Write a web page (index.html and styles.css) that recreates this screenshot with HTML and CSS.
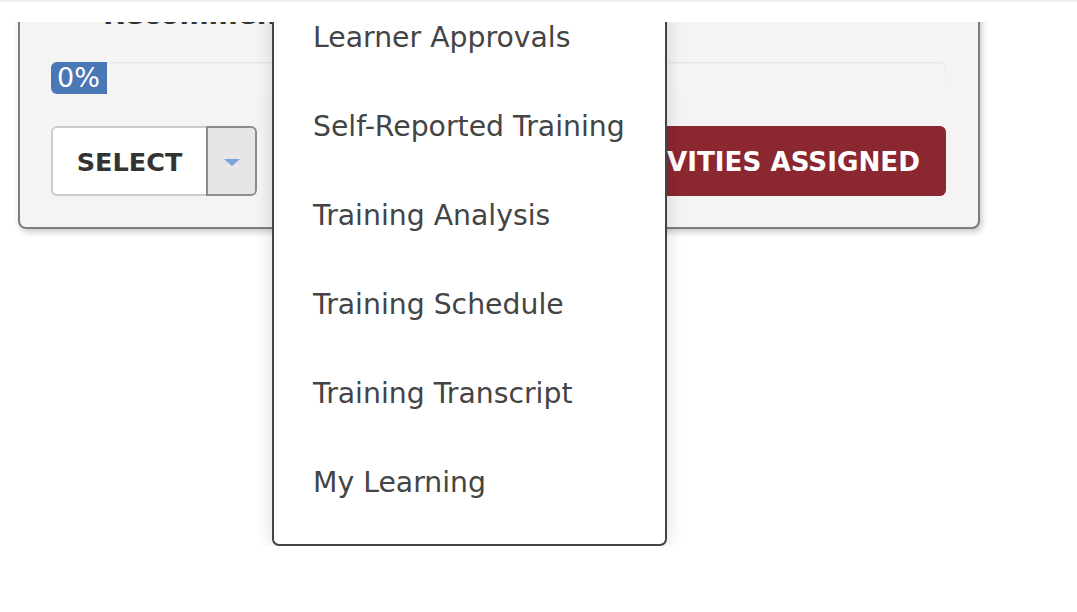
FILE: index.html
```html
<!DOCTYPE html>
<html lang="en">
<head>
<meta charset="utf-8">
<title>Training</title>
<link rel="stylesheet" href="styles.css">
</head>
<body>
<header class="topbar"></header>
<main class="page">
  <section class="card">
    <h2 class="card-title">Recommended</h2>
    <div class="progress">
      <div class="progress-fill" style="width: 56px;">0%</div>
    </div>
    <div class="actions">
      <div class="select-group">
        <button class="select-main" type="button">SELECT</button>
        <button class="select-caret" type="button" aria-label="Open"><span class="caret"></span></button>
      </div>
      <button class="assigned-btn" type="button">NO ACTIVITIES ASSIGNED</button>
    </div>
  </section>
</main>
<nav class="menu">
  <a class="menu-item" href="#">Learner Approvals</a>
  <a class="menu-item" href="#">Self-Reported Training</a>
  <a class="menu-item" href="#">Training Analysis</a>
  <a class="menu-item" href="#">Training Schedule</a>
  <a class="menu-item" href="#">Training Transcript</a>
  <a class="menu-item" href="#">My Learning</a>
</nav>
</body>
</html>
```

FILE: styles.css
```css
html, body {
  margin: 0;
  padding: 0;
  background: #ffffff;
  overflow: hidden;
}

body {
  font-family: "DejaVu Sans", Verdana, sans-serif;
  color: #333333;
  position: relative;
  min-height: 612px;
}

.topbar {
  position: fixed;
  top: 0;
  left: 0;
  right: 0;
  height: 22px;
  box-sizing: border-box;
  background: #ffffff;
  border-top: 2px solid #f2f2f2;
  z-index: 10;
}

.page {
  padding-left: 18px;
}

.card {
  width: 962px;
  box-sizing: border-box;
  margin-top: -30px;
  background: #f4f4f4;
  border: 2px solid #7d7d7d;
  border-radius: 8px;
  box-shadow: 2px 3px 6px rgba(0, 0, 0, 0.22);
  padding: 26px 32px 31px 31px;
}

.card-title {
  margin: 0 0 30px 52px;
  white-space: nowrap;
  font-size: 28px;
  line-height: 34px;
  font-weight: bold;
  color: #333333;
}

.progress {
  height: 32px;
  border-radius: 6px;
  background: #f5f5f5;
  box-shadow: inset 0 1px 2px rgba(0, 0, 0, 0.08);
  overflow: hidden;
  display: flex;
  margin-bottom: 32px;
}

.progress-fill {
  background: #4a77b5;
  color: #ffffff;
  font-size: 27px;
  line-height: 32px;
  padding-left: 6px;
  box-sizing: border-box;
}

.actions {
  display: flex;
  height: 70px;
}

.select-group {
  display: flex;
  height: 70px;
}

.select-main {
  width: 155px;
  height: 70px;
  box-sizing: border-box;
  background: #ffffff;
  border: 2px solid #cccccc;
  border-right: 0;
  border-radius: 6px 0 0 6px;
  font-family: "DejaVu Sans", Verdana, sans-serif;
  font-weight: bold;
  font-size: 25.5px;
  color: #333333;
  padding: 2px 0 0;
  margin: 0;
}

.select-caret {
  width: 51px;
  height: 70px;
  box-sizing: border-box;
  background: #e6e6e6;
  border: 2px solid #8c8c8c;
  border-radius: 0 6px 6px 0;
  padding: 0;
  margin: 0;
  display: flex;
  align-items: center;
  justify-content: center;
}

.caret {
  width: 0;
  height: 0;
  border-left: 8px solid transparent;
  border-right: 8px solid transparent;
  border-top: 7px solid #7aa3d9;
  margin-top: 2px;
}

.assigned-btn {
  flex: 1;
  margin: 0 0 0 30px;
  height: 70px;
  border: 0;
  border-radius: 6px;
  background: #8b2731;
  color: #ffffff;
  font-family: "DejaVu Sans", Verdana, sans-serif;
  font-weight: bold;
  font-size: 26.2px;
  display: flex;
  align-items: center;
  justify-content: flex-end;
  padding: 2px 26px 0 0;
}

.menu {
  position: absolute;
  left: 272px;
  top: -16px;
  width: 395px;
  box-sizing: border-box;
  background: #ffffff;
  border: 2px solid #444444;
  border-radius: 7px;
  padding: 8px 0 16px;
  box-shadow: 0 0 18px rgba(0, 0, 0, 0.14);
  clip-path: inset(-60px -40px 0 -40px);
  z-index: 5;
  display: flex;
  flex-direction: column;
}

.menu-item {
  display: block;
  height: 89px;
  line-height: 88px;
  padding-left: 39px;
  font-size: 28.3px;
  color: #444444;
  text-decoration: none;
  white-space: nowrap;
}
```
